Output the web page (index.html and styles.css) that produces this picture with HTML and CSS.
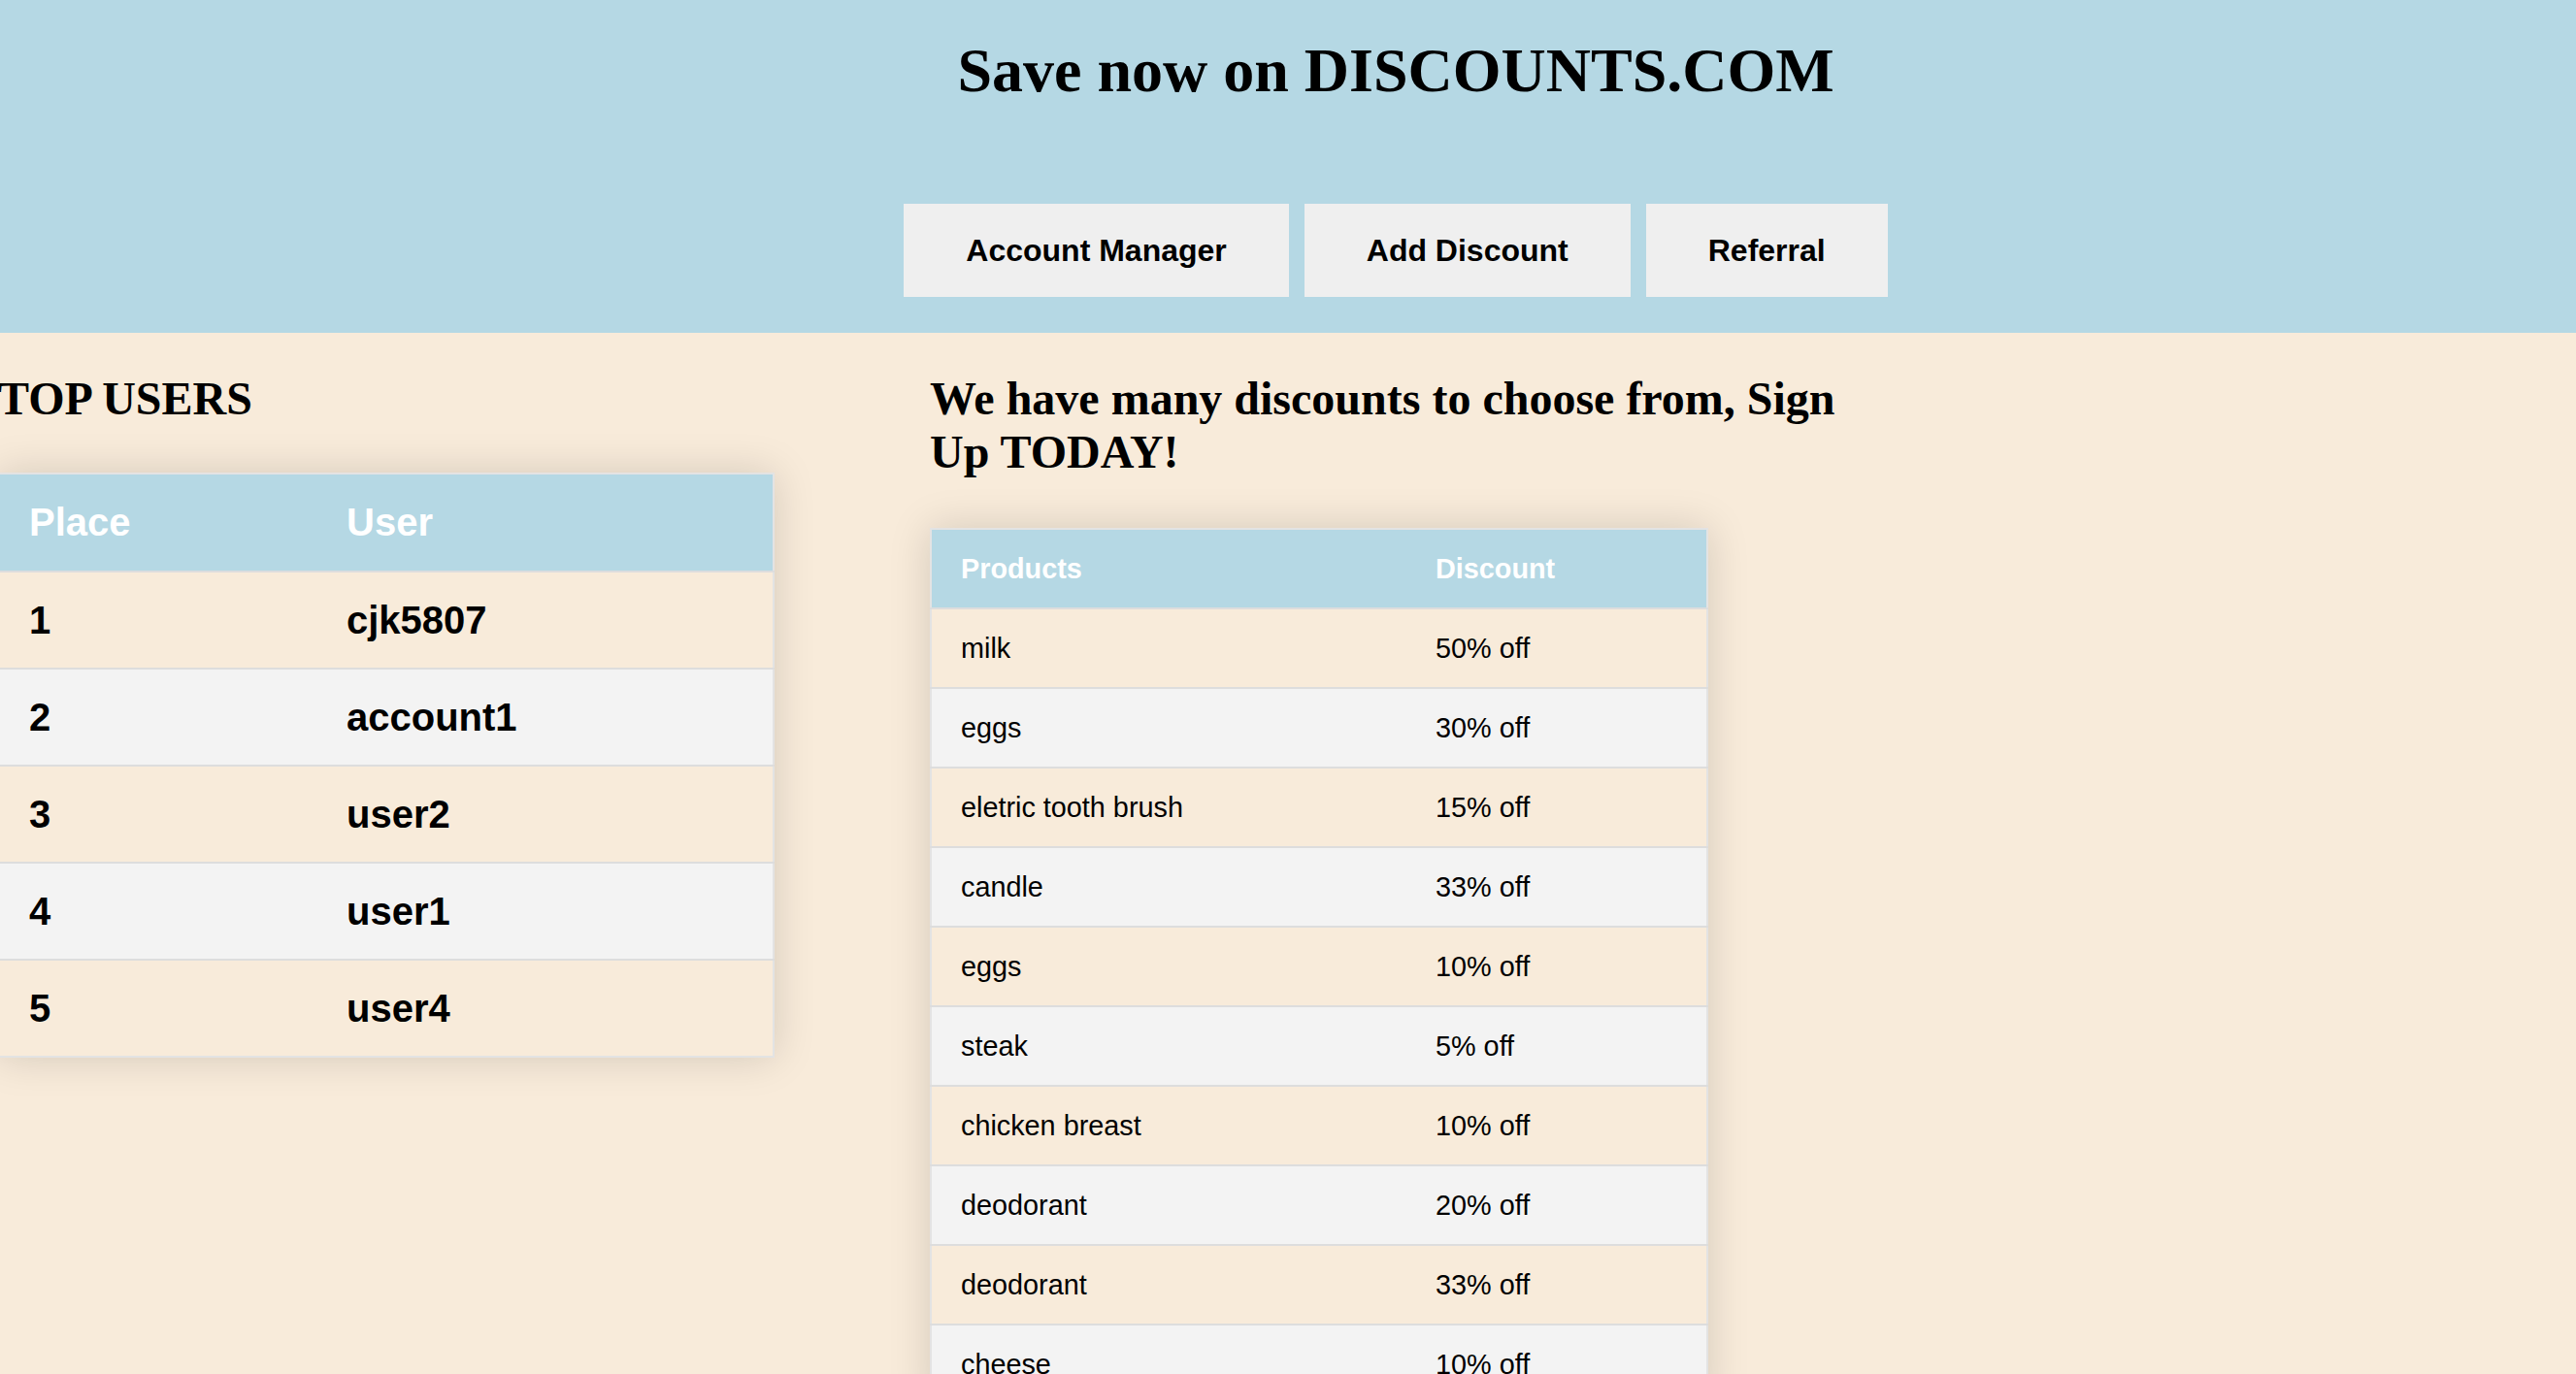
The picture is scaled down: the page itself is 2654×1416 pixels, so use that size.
FILE: index.html
```html
<!DOCTYPE html>
<html lang="en">
<head>
<meta charset="utf-8">
<title>DISCOUNTS.COM</title>
<link rel="stylesheet" href="styles.css">
</head>
<body>
<header class="site-header">
  <h1 class="title">Save now on DISCOUNTS.COM</h1>
  <nav class="nav">
    <button class="nav-btn">Account Manager</button>
    <button class="nav-btn">Add Discount</button>
    <button class="nav-btn">Referral</button>
  </nav>
</header>
<main class="content">
  <section class="col col-left">
    <h2 class="heading">TOP USERS</h2>
    <table class="styled-table users-table">
      <colgroup><col class="users-c1"><col class="users-c2"></colgroup>
      <thead>
        <tr><th>Place</th><th>User</th></tr>
      </thead>
      <tbody>
        <tr><td>1</td><td>cjk5807</td></tr>
        <tr><td>2</td><td>account1</td></tr>
        <tr><td>3</td><td>user2</td></tr>
        <tr><td>4</td><td>user1</td></tr>
        <tr><td>5</td><td>user4</td></tr>
      </tbody>
    </table>
  </section>
  <section class="col col-right">
    <h2 class="heading">We have many discounts to choose from, Sign Up TODAY!</h2>
    <table class="styled-table discount-table">
      <colgroup><col class="disc-c1"><col class="disc-c2"></colgroup>
      <thead>
        <tr><th>Products</th><th>Discount</th></tr>
      </thead>
      <tbody>
        <tr><td>milk</td><td>50% off</td></tr>
        <tr><td>eggs</td><td>30% off</td></tr>
        <tr><td>eletric tooth brush</td><td>15% off</td></tr>
        <tr><td>candle</td><td>33% off</td></tr>
        <tr><td>eggs</td><td>10% off</td></tr>
        <tr><td>steak</td><td>5% off</td></tr>
        <tr><td>chicken breast</td><td>10% off</td></tr>
        <tr><td>deodorant</td><td>20% off</td></tr>
        <tr><td>deodorant</td><td>33% off</td></tr>
        <tr><td>cheese</td><td>10% off</td></tr>
      </tbody>
    </table>
  </section>
</main>
</body>
</html>
```
FILE: styles.css
```css
html, body {
  margin: 0;
  padding: 0;
}

body {
  background: #f8ebda;
  font-family: "Liberation Serif", "Times New Roman", serif;
  color: #000;
  overflow: hidden;
}

.site-header {
  background: #b5d8e4;
  padding: 36px 0 37px 222px;
  display: flex;
  flex-direction: column;
  align-items: center;
}

.title {
  margin: 0;
  font-family: "Liberation Serif", "Times New Roman", serif;
  font-weight: 700;
  font-size: 64px;
  line-height: 74px;
}

.nav {
  margin-top: 100px;
  display: flex;
  gap: 16px;
}

.nav-btn {
  font-family: "Liberation Sans", Arial, sans-serif;
  font-weight: 700;
  font-size: 32px;
  line-height: 38px;
  padding: 29px 64px;
  background: #efefef;
  color: #000;
  border: none;
  margin: 0;
}

.content {
  display: flex;
  align-items: flex-start;
}

.col-left {
  width: 960px;
  margin-left: -2px;
}

.col-right {
  width: 960px;
}

.heading {
  margin: 40px 0;
  font-family: "Liberation Serif", "Times New Roman", serif;
  font-weight: 700;
  font-size: 48px;
  line-height: 55px;
}

.styled-table {
  margin: 51px 0 50px;
  border-collapse: collapse;
  border: 2px solid #e3e3e3;
  box-shadow: 0 0 40px rgba(0, 0, 0, 0.15);
  width: 800px;
  table-layout: fixed;
  font-family: "Liberation Sans", Arial, sans-serif;
  text-align: left;
}

.styled-table thead tr {
  background: #b5d8e4;
  color: #fff;
}

.styled-table th,
.styled-table td {
  padding: 24px 30px;
  text-align: left;
}

.styled-table tbody tr {
  border-top: 2px solid #dddddd;
}

.styled-table tbody tr:nth-of-type(even) {
  background: #f3f3f3;
}

.users-table {
  width: 798px;
  margin-top: 49px;
  font-size: 40px;
  font-weight: 700;
}

.users-table td {
  line-height: 50px;
}

.users-table th {
  line-height: 51px;
}

.users-c1 { width: 328px; }
.users-c2 { width: 470px; }

.discount-table {
  font-size: 28.8px;
  font-weight: 400;
}

.discount-table th {
  font-weight: 700;
  line-height: 32px;
}

.discount-table td {
  line-height: 32px;
}

.disc-c1 { width: 490px; }
.disc-c2 { width: 310px; }
```
